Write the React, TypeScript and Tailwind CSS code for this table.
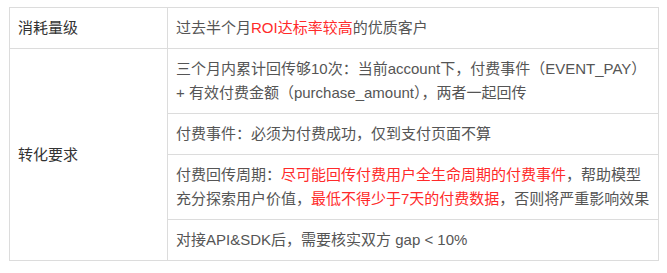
const red = "text-[#ff2a2a]";

function Cell({ children }: { children: React.ReactNode }) {
  return (
    <td className="border border-[#dcdcdc] px-2 py-2 text-[#555] align-middle">
      {children}
    </td>
  );
}

export default function App() {
  return (
    <div className="w-[667px] h-[273px] bg-white pt-[7px] pl-[9px] font-['Liberation_Sans','Noto_Sans_CJK_SC',sans-serif] text-[15px] leading-6">
      <table className="border-collapse w-[649px] table-fixed">
        <colgroup>
          <col className="w-[158px]" />
          <col className="w-[491px]" />
        </colgroup>
        <tbody>
          <tr>
            <td className="border border-[#dcdcdc] px-2 py-2 text-[#333]">消耗量级</td>
            <Cell>
              过去半个月<span className={red}>ROI达标率较高</span>的优质客户
            </Cell>
          </tr>
          <tr>
            <td rowSpan={4} className="border border-[#dcdcdc] px-2 py-2 text-[#333] align-middle">
              转化要求
            </td>
            <Cell>
              <div className="whitespace-nowrap">三个月内累计回传够10次：当前account下，付费事件（EVENT_PAY）</div>
              <div className="whitespace-nowrap">+ 有效付费金额（purchase_amount），两者一起回传</div>
            </Cell>
          </tr>
          <tr>
            <Cell>付费事件：必须为付费成功，仅到支付页面不算</Cell>
          </tr>
          <tr>
            <Cell>
              <div className="whitespace-nowrap">
                付费回传周期：<span className={red}>尽可能回传付费用户全生命周期的付费事件</span>，帮助模型
              </div>
              <div className="whitespace-nowrap">
                充分探索用户价值，<span className={red}>最低不得少于7天的付费数据</span>，否则将严重影响效果
              </div>
            </Cell>
          </tr>
          <tr>
            <Cell>对接API&amp;SDK后，需要核实双方 gap &lt; 10%</Cell>
          </tr>
        </tbody>
      </table>
    </div>
  );
}
